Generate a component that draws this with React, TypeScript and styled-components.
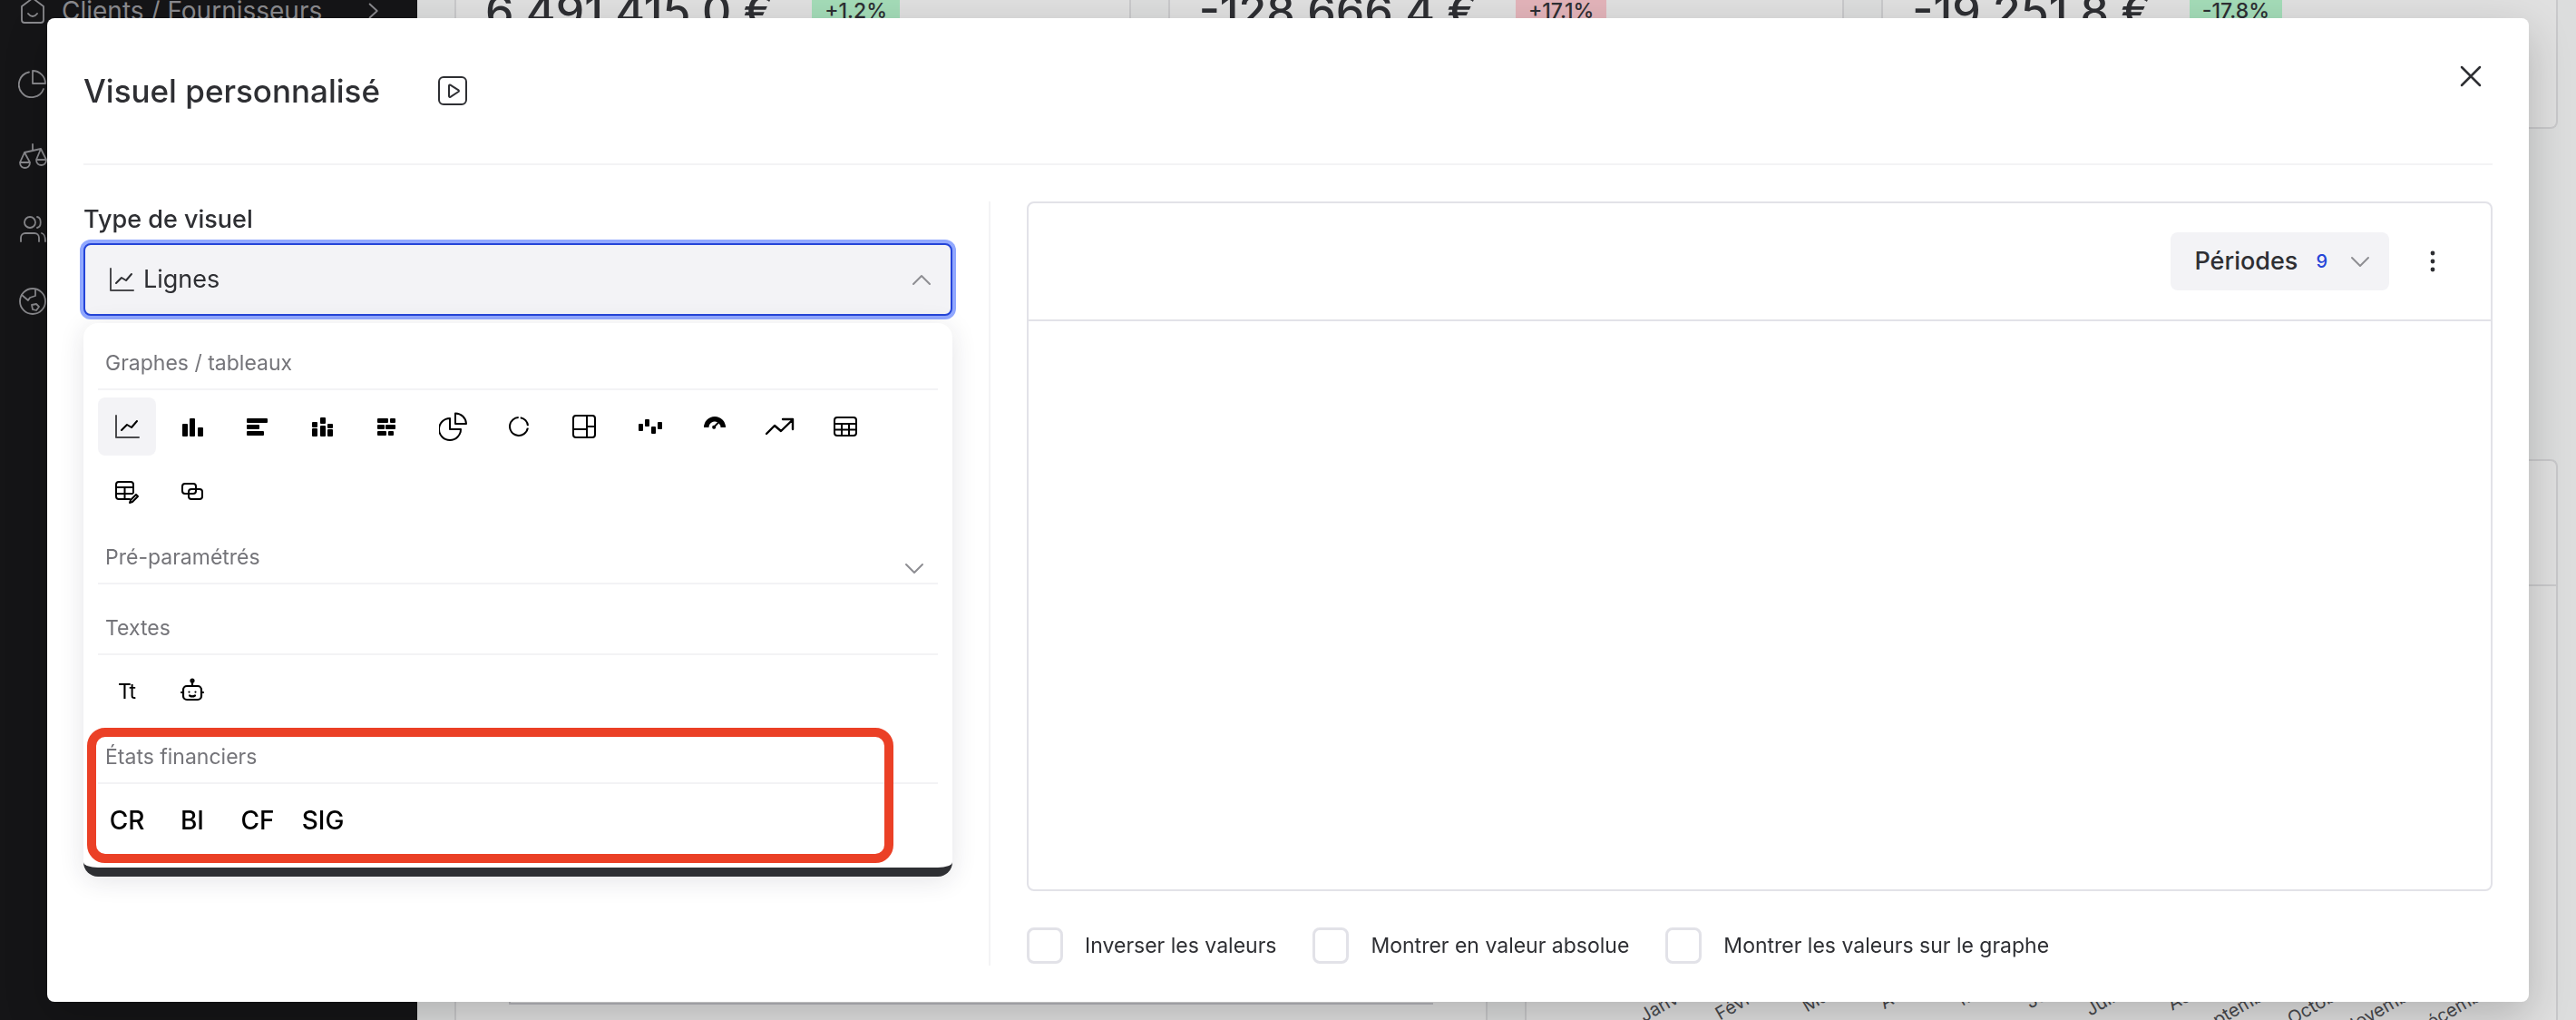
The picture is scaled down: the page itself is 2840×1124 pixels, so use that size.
import React from "react";
import styled, { createGlobalStyle, css } from "styled-components";

const GlobalStyle = createGlobalStyle`
  *, *::before, *::after { box-sizing: border-box; }
  body {
    margin: 0;
    overflow: hidden;
    font-family: Inter, "Liberation Sans", sans-serif;
    color: #2e2f33;
    background: #dcdddd;
  }
  button { font: inherit; color: inherit; border: 0; padding: 0; background: none; cursor: pointer; }
  h1, h2, h3, p, ul { margin: 0; padding: 0; font: inherit; }
  svg { display: block; flex: none; }
`;

/* ---------- page behind the dialog ---------- */

const Page = styled.div`
  display: flex;
  height: 100vh;
  overflow: hidden;
`;

const Sidebar = styled.nav`
  flex: 0 0 460px;
  display: flex;
  flex-direction: column;
  margin-top: -28px;
  background: #151517;
  color: #8a8a8e;
`;

const NavLink = styled.a`
  display: flex;
  align-items: center;
  gap: 16px;
  height: 80px;
  padding: 0 38px 0 20px;
  font-size: 28px;
  line-height: 40px;
  color: inherit;
  text-decoration: none;
`;

const NavText = styled.span`
  flex: 1;
  white-space: nowrap;
`;

const Main = styled.main`
  flex: 1;
  min-width: 0;
  display: flex;
  flex-direction: column;
  padding: 0 20px 0 41px;
`;

const Kpis = styled.div`
  flex: none;
  display: grid;
  grid-template-columns: repeat(3, minmax(0, 1fr));
  gap: 41px;
  height: 142px;
  margin-bottom: 364px;
`;

const surface = css`
  background: #e0e0e0;
  border: 2px solid #c9c9cb;
`;

const KpiCard = styled.section`
  ${surface}
  border-top: 0;
  border-radius: 0 0 8px 8px;
  padding: 0 32px;
`;

const KpiLine = styled.div`
  display: flex;
  align-items: center;
  gap: 42px;
  height: 64px;
  margin-top: -20px;
  white-space: nowrap;
`;

const KpiValue = styled.span`
  font-size: 50px;
  line-height: 64px;
  font-weight: 500;
`;

const Badge = styled.span<{ $bad?: boolean }>`
  padding: 4px 14px;
  border-radius: 4px;
  font-size: 23px;
  line-height: 32px;
  font-weight: 500;
  background: ${(p) => (p.$bad ? "#e3b4ba" : "#a4dcb8")};
`;

const Charts = styled.div`
  flex: 1;
  min-height: 0;
  display: grid;
  grid-template-columns: minmax(0, 1fr) minmax(0, 1fr);
  gap: 41px;
`;

const ChartCard = styled.section`
  ${surface}
  border-radius: 8px 8px 0 0;
  border-bottom: 0;
`;

const ChartHead = styled.div`
  height: 138px;
  border-bottom: 2px solid #c9c9cb;
`;

const Plot = styled.div`
  height: 461px;
  margin: 0 58px;
  border: solid #b9b9be;
  border-width: 0 0 2px 2px;
`;

const Months = styled.svg`
  margin-top: 444px;
  overflow: visible;
  font-size: 20px;
  fill: #48494d;
`;

/* ---------- dialog ---------- */

const Overlay = styled.div`
  position: fixed;
  inset: 0;
  padding: 20px 52px;
  display: flex;
`;

const Dialog = styled.div`
  flex: 1;
  min-width: 0;
  display: flex;
  flex-direction: column;
  padding: 0 40px 40px;
  background: #fff;
  border-radius: 8px;
  box-shadow: 0 16px 48px rgba(0, 0, 0, 0.2);
`;

const DialogHead = styled.header`
  display: flex;
  align-items: center;
  gap: 64px;
  height: 162px;
  margin-bottom: 40px;
  border-bottom: 2px solid #f3f3f5;
`;

const Title = styled.h1`
  font-size: 35px;
  line-height: 48px;
  font-weight: 500;
`;

const CloseButton = styled.button`
  align-self: flex-start;
  margin: 48px 8px 0 auto;
`;

const Body = styled.div`
  flex: 1;
  min-height: 0;
  display: grid;
  grid-template-columns: minmax(0, 67fr) 2px minmax(0, 113fr);
  gap: 40px;
`;

const Divider = styled.div`
  background: #f3f3f5;
`;

const Field = styled.div`
  position: relative;
  display: flex;
  flex-direction: column;
  gap: 6px;
  align-self: start;
`;

const FieldLabel = styled.label`
  font-size: 27px;
  line-height: 40px;
  font-weight: 500;
`;

const SelectButton = styled.button`
  && {
    display: flex;
    align-items: center;
    gap: 8px;
    height: 80px;
    padding: 0 16px 0 24px;
    border: 2px solid #2545d8;
    border-radius: 8px;
    background: #f3f3f6;
    box-shadow: 0 0 0 4px #91a8ff;
    font-size: 27px;
    line-height: 40px;
    text-align: left;
  }
`;

const Grow = styled.span`
  flex: 1;
`;

const Menu = styled.div`
  position: absolute;
  top: 100%;
  left: 0;
  right: 0;
  margin-top: 8px;
  display: flex;
  flex-direction: column;
  gap: 12px;
  padding: 16px 16px 20px;
  background: #fff;
  border-bottom: 10px solid #2e2f33;
  border-radius: 16px;
  box-shadow: 0 4px 28px rgba(30, 30, 60, 0.12);
`;

const MenuSection = styled.section`
  position: relative;
  display: flex;
  flex-direction: column;
  gap: 8px;
`;

const MenuHead = styled.h2`
  display: flex;
  align-items: center;
  justify-content: space-between;
  height: 58px;
  padding: 0 10px 0 8px;
  border-bottom: 2px solid #f3f3f5;
  font-size: 23px;
  line-height: 32px;
  color: #747479;
`;

const MenuToggle = styled.button`
  align-self: flex-end;
`;

const Options = styled.div`
  display: flex;
  flex-wrap: wrap;
  gap: 8px;
`;

const Option = styled.button<{ $active?: boolean }>`
  && {
    display: grid;
    place-items: center;
    min-width: 64px;
    height: 64px;
    border-radius: 8px;
    font-size: 28px;
    line-height: 40px;
    font-weight: 500;
    color: #000;
    background: ${(p) => (p.$active ? "#f3f3f6" : "transparent")};
  }
`;

const SmallText = styled.span`
  font-size: 23px;
  line-height: 32px;
  font-weight: 400;
`;

const Highlight = styled.div`
  position: absolute;
  inset: -4px 49px -15px -12px;
  border: 10px solid #eb4026;
  border-radius: 20px;
  pointer-events: none;
`;

const Preview = styled.div`
  min-width: 0;
  display: flex;
  flex-direction: column;
  gap: 40px;
`;

const Panel = styled.section`
  flex: 1;
  border: 2px solid #e2e2e8;
  border-radius: 8px;
`;

const PanelHead = styled.div`
  display: flex;
  align-items: center;
  justify-content: flex-end;
  gap: 32px;
  height: 130px;
  padding-right: 48px;
  border-bottom: 2px solid #e2e2e8;
`;

const PeriodButton = styled.button`
  && {
    display: flex;
    align-items: center;
    gap: 20px;
    height: 64px;
    padding: 0 16px 0 26px;
    border-radius: 8px;
    background: #f3f3f6;
    font-size: 27px;
    line-height: 40px;
    font-weight: 500;
  }
`;

const Count = styled.span`
  font-size: 20px;
  color: #2545d8;
`;

const Checks = styled.div`
  display: flex;
  gap: 40px;
  height: 42px;
`;

const CheckLabel = styled.label`
  display: flex;
  align-items: center;
  gap: 24px;
  height: 40px;
  font-size: 23px;
  line-height: 32px;
  white-space: nowrap;
`;

const CheckBox = styled.input`
  appearance: none;
  width: 40px;
  height: 40px;
  margin: 0;
  background: #fff;
  border: 3px solid #e2e2e8;
  border-radius: 8px;
`;

/* ---------- icons ---------- */

type IconProps = { size?: number; width?: number; color?: string; children: React.ReactNode };

const Icon = ({ size = 32, width = 2, color = "currentColor", children }: IconProps) => (
  <svg
    width={size}
    height={size}
    viewBox="0 0 32 32"
    fill="none"
    stroke={color}
    strokeWidth={width}
    strokeLinecap="round"
    strokeLinejoin="round"
    aria-hidden="true"
  >
    {children}
  </svg>
);

const Chevron = ({ up }: { up?: boolean }) => (
  <Icon color="#8e8e93" width={2}>
    <path d={up ? "M7 21l9-9 9 9" : "M7 12l9 9 9-9"} />
  </Icon>
);

const LineChart = () => (
  <Icon>
    <path d="M4 4v24h25" stroke="#4a4a4d" />
    <path d="M10 20l6-6 5 3 6-7" />
  </Icon>
);

const Filled = ({ children }: { children: React.ReactNode }) => (
  <svg width="32" height="32" viewBox="0 0 32 32" fill="currentColor" aria-hidden="true">
    {children}
  </svg>
);

type Bar = [number, number, number, number];
const Bars = ({ rects }: { rects: Bar[] }) => (
  <Filled>
    {rects.map(([x, y, w, h]) => (
      <rect key={`${x}-${y}`} x={x} y={y} width={w} height={h} rx="1" />
    ))}
  </Filled>
);

const graphs: { name: string; icon: React.ReactNode }[] = [
  { name: "Lignes", icon: <LineChart /> },
  { name: "Barres", icon: <Bars rects={[[5, 13, 6, 14], [13, 7, 6, 20], [22, 17, 6, 10]]} /> },
  { name: "Barres horizontales", icon: <Bars rects={[[4, 7, 23, 5], [4, 14, 14, 5], [4, 21, 19, 5]]} /> },
  {
    name: "Barres empilées",
    icon: <Bars rects={[[4, 11, 6, 6], [4, 18, 6, 9], [13, 6, 6, 7], [13, 15, 6, 12], [21, 13, 6, 5], [21, 19, 6, 8]]} />,
  },
  {
    name: "Barres horizontales empilées",
    icon: <Bars rects={[[4, 7, 12, 5], [18, 7, 6, 5], [4, 14, 8, 5], [13, 14, 11, 5], [4, 21, 10, 5], [16, 21, 6, 5]]} />,
  },
  {
    name: "Secteurs",
    icon: (
      <Icon>
        <path d="M12 7A12 12 0 1 0 24 19H12z" />
        <path d="M18 1.500v11.500h12A12 12 0 0 0 18 1.500z" />
      </Icon>
    ),
  },
  {
    name: "Anneau",
    icon: (
      <Icon>
        <circle cx="16" cy="16" r="10" strokeDasharray="13 2.500 44.830 2.500" strokeLinecap="butt" transform="rotate(-80 16 16)" />
      </Icon>
    ),
  },
  {
    name: "Treemap",
    icon: (
      <Icon>
        <rect x="4" y="4" width="24" height="24" rx="3" />
        <path d="M19 4v24M4 19h15M19 16h9" />
      </Icon>
    ),
  },
  { name: "Cascade", icon: <Bars rects={[[4, 13, 5, 8], [11, 8, 5, 8], [18, 16, 5, 8], [25, 11, 5, 8]]} /> },
  {
    name: "Jauge",
    icon: (
      <Filled>
        <path d="M4 17a12 12 0 0 1 24 0h-5.500a6.500 6.500 0 0 0-2-4.500L17 16a2 2 0 1 1-1.500-1.200L19 11.200A6.500 6.500 0 0 0 9.500 17z" />
      </Filled>
    ),
  },
  {
    name: "Tendance",
    icon: (
      <Icon width={2.4} size={32}>
        <path d="M1 24l9-9 7 6L30 8.500M19 8h11v11" />
      </Icon>
    ),
  },
  {
    name: "Tableau",
    icon: (
      <Icon>
        <rect x="4" y="6" width="24" height="20" rx="3" />
        <path d="M4 13h24M4 19.500h24M12 13v13M20 13v13" />
      </Icon>
    ),
  },
  {
    name: "Tableau personnalisé",
    icon: (
      <Icon>
        <path d="M19 24H7a3 3 0 0 1-3-3V8a3 3 0 0 1 3-3h13a3 3 0 0 1 3 3v9M4 11h19M4 18h18M13.500 11v13" />
        <path d="M26 19l2 2-6 6-3 1 1-3z" />
      </Icon>
    ),
  },
  {
    name: "Superposition",
    icon: (
      <Icon>
        <rect x="5" y="7" width="15" height="11" rx="3" />
        <rect x="12" y="13" width="15" height="11" rx="3" />
      </Icon>
    ),
  },
];

const Robot = () => (
  <Icon width={2.2}>
    <rect x="6" y="10" width="20" height="15" rx="4" />
    <path d="M16 10V5M4 17h2M26 17h2M12.500 16.500v.1M19.500 16.500v.1M13 20.500c2 1.300 4 1.300 6 0" />
    <circle cx="16" cy="4" r="1.500" />
  </Icon>
);

const navItems: { label: string; text?: string; icon: React.ReactNode }[] = [
  {
    label: "Clients / Fournisseurs",
    text: "Clients / Fournisseurs",
    icon: <path d="M4 11L16 2l12 9v15a3 3 0 0 1-3 3H7a3 3 0 0 1-3-3zM11 19c3 4 7 4 10 0" />,
  },
  { label: "Analyses", icon: <path d="M12 3.500A14 14 0 1 0 28 22M16 2v14h14A14 14 0 0 0 16 2z" /> },
  {
    label: "Bilan",
    icon: <path d="M16 3v7M7 12l18-4M7 12L2 23h11zM25 8l-5 12h11zM2 23c0 8 11 8 11 0M20 20c0 8 11 8 11 0" />,
  },
  {
    label: "Équipe",
    icon: (
      <>
        <circle cx="13" cy="9" r="6" />
        <path d="M3 30v-4a5 5 0 0 1 5-5h10a5 5 0 0 1 5 5v4M21 3c5 1 5 11 0 12M26 21c3 1 4 3 4 9" />
      </>
    ),
  },
  {
    label: "International",
    icon: (
      <>
        <circle cx="16" cy="16" r="14" />
        <path d="M4 9l7 6 2-3 6-2V3M15 20l5-1 3 3-3 4-4-1z" />
      </>
    ),
  },
];

const kpis = [
  { value: "6 491 415,0 €", change: "+1.2%" },
  { value: "-128 666,4 €", change: "+17.1%", bad: true },
  { value: "-19 251,8 €", change: "-17.8%" },
];

const months = [
  "Janvier", "Février", "Mars", "Avril", "Mai", "Juin",
  "Juillet", "Août", "Septembre", "Octobre", "Novembre", "Décembre",
];

export default function App() {
  return (
    <>
      <GlobalStyle />
      <Page>
        <Sidebar>
          {navItems.map((item) => (
            <NavLink key={item.label} href="#" aria-label={item.label}>
              <Icon width={1.8}>{item.icon}</Icon>
              {item.text && <NavText>{item.text}</NavText>}
              {item.text && (
                <Icon size={20} width={3}>
                  <path d="M9 4l13 12L9 28" />
                </Icon>
              )}
            </NavLink>
          ))}
        </Sidebar>
        <Main>
          <Kpis>
            {kpis.map((k) => (
              <KpiCard key={k.value}>
                <KpiLine>
                  <KpiValue>{k.value}</KpiValue>
                  <Badge $bad={k.bad}>{k.change}</Badge>
                </KpiLine>
              </KpiCard>
            ))}
          </Kpis>
          <Charts>
            <ChartCard>
              <ChartHead />
              <Plot />
            </ChartCard>
            <ChartCard>
              <ChartHead />
              <Months width="100%" height="40">
                {months.map((m, i) => (
                  <text key={m} textAnchor="end" transform={`translate(${190 + i * 80} 2) rotate(-30)`}>
                    {m}
                  </text>
                ))}
              </Months>
            </ChartCard>
          </Charts>
        </Main>
      </Page>

      <Overlay>
        <Dialog role="dialog" aria-modal="true" aria-labelledby="dialog-title">
          <DialogHead>
            <Title id="dialog-title">Visuel personnalisé</Title>
            <button type="button" aria-label="Voir la démonstration">
              <Icon>
                <rect x="1" y="1" width="30" height="30" rx="5" />
                <path d="M12 10.500v11.500a1 1 0 0 0 1.500.8l9-5.800a1 1 0 0 0 0-1.600l-9-5.800a1 1 0 0 0-1.500.9z" />
              </Icon>
            </button>
            <CloseButton type="button" aria-label="Fermer">
              <Icon width={2.5}>
                <path d="M6 6l20 20M26 6L6 26" />
              </Icon>
            </CloseButton>
          </DialogHead>

          <Body>
            <Field>
              <FieldLabel htmlFor="visual-type">Type de visuel</FieldLabel>
              <SelectButton id="visual-type" type="button" aria-haspopup="listbox" aria-expanded="true">
                <LineChart />
                <Grow>Lignes</Grow>
                <Chevron up />
              </SelectButton>
              <Menu>
                <MenuSection>
                  <MenuHead>Graphes / tableaux</MenuHead>
                  <Options>
                    {graphs.map((g, i) => (
                      <Option key={g.name} type="button" aria-label={g.name} $active={i === 0}>
                        {g.icon}
                      </Option>
                    ))}
                  </Options>
                </MenuSection>
                <MenuSection>
                  <MenuHead>
                    Pré-paramétrés
                    <MenuToggle type="button" aria-label="Déplier">
                      <Chevron />
                    </MenuToggle>
                  </MenuHead>
                  <Options />
                </MenuSection>
                <MenuSection>
                  <MenuHead>Textes</MenuHead>
                  <Options>
                    <Option type="button">
                      <SmallText>Tt</SmallText>
                    </Option>
                    <Option type="button" aria-label="Assistant">
                      <Robot />
                    </Option>
                  </Options>
                </MenuSection>
                <MenuSection>
                  <MenuHead>États financiers</MenuHead>
                  <Options>
                    {["CR", "BI", "CF", "SIG"].map((s) => (
                      <Option key={s} type="button">
                        {s}
                      </Option>
                    ))}
                  </Options>
                  <Highlight />
                </MenuSection>
              </Menu>
            </Field>

            <Divider />

            <Preview>
              <Panel>
                <PanelHead>
                  <PeriodButton type="button">
                    Périodes
                    <Count>9</Count>
                    <Chevron />
                  </PeriodButton>
                  <button type="button" aria-label="Plus d'options">
                    <Filled>
                      <circle cx="16" cy="7" r="2.400" />
                      <circle cx="16" cy="16" r="2.400" />
                      <circle cx="16" cy="25" r="2.400" />
                    </Filled>
                  </button>
                </PanelHead>
              </Panel>
              <Checks>
                {["Inverser les valeurs", "Montrer en valeur absolue", "Montrer les valeurs sur le graphe"].map((t) => (
                  <CheckLabel key={t}>
                    <CheckBox type="checkbox" />
                    {t}
                  </CheckLabel>
                ))}
              </Checks>
            </Preview>
          </Body>
        </Dialog>
      </Overlay>
    </>
  );
}
